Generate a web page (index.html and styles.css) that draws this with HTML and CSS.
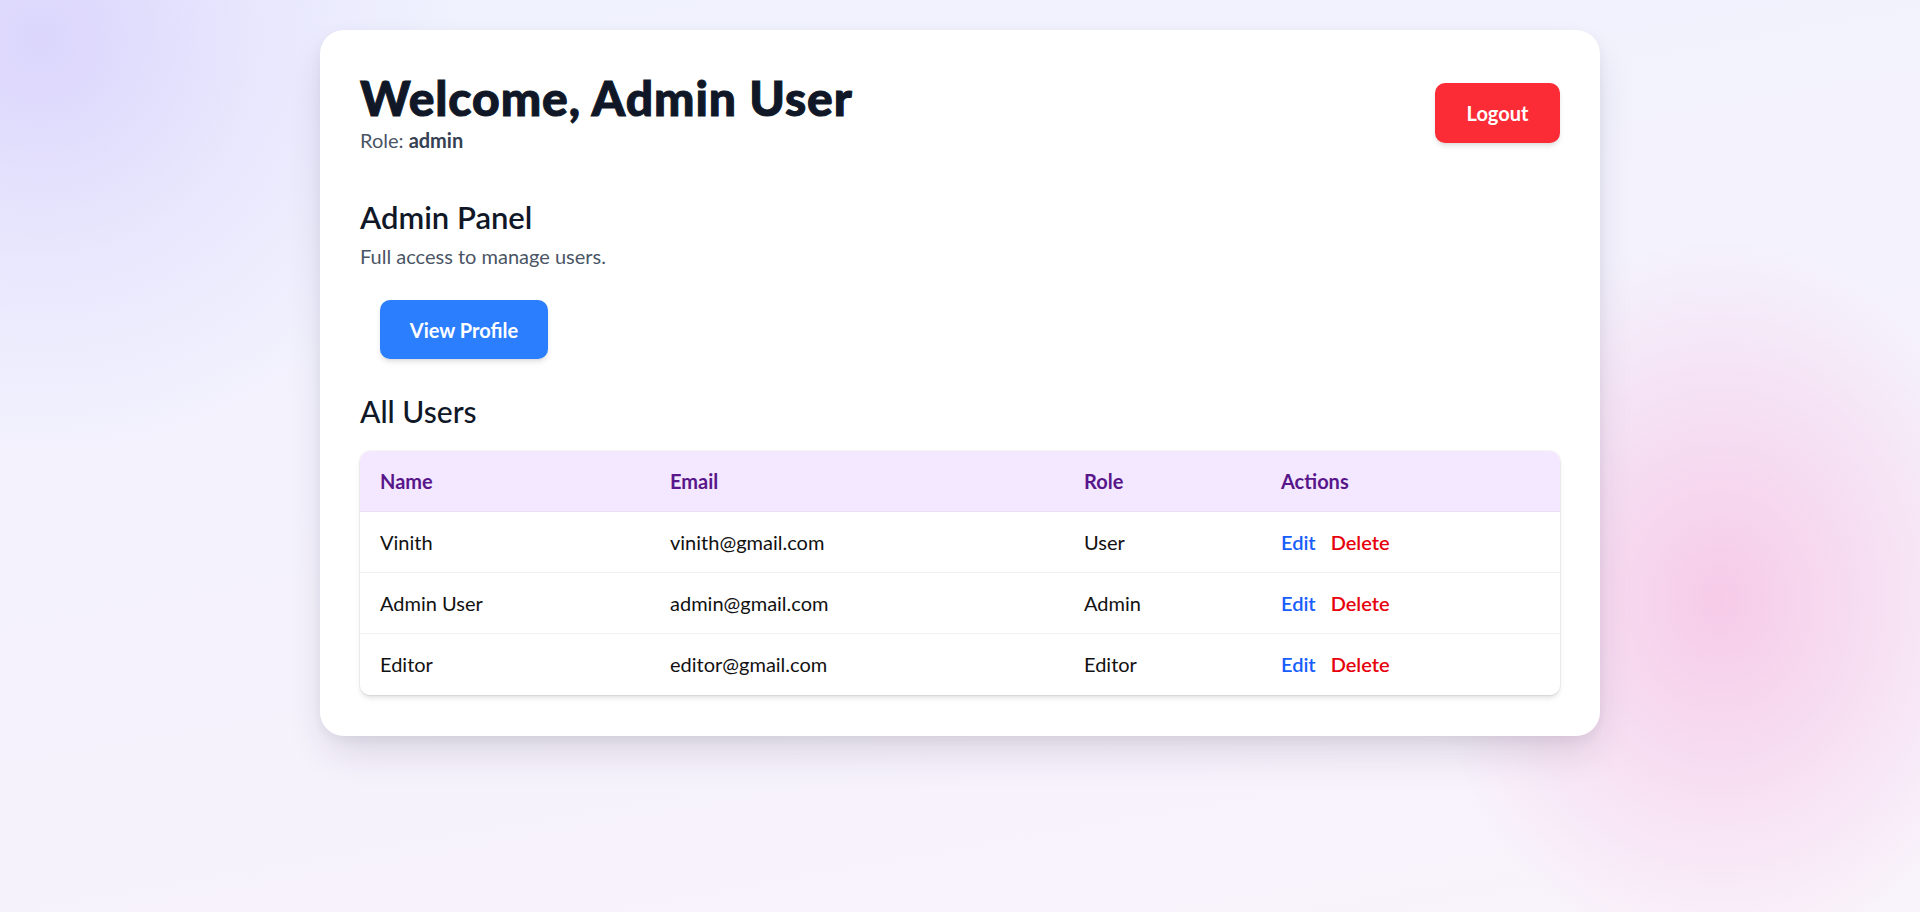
FILE: index.html
```html
<!DOCTYPE html>
<html lang="en">
<head>
<meta charset="utf-8">
<title>Dashboard</title>
<link rel="stylesheet" href="styles.css">
</head>
<body>
  <main class="card">
    <header class="header">
      <div class="greeting">
        <h1 class="title">Welcome, Admin User</h1>
        <p class="role">Role: <strong>admin</strong></p>
      </div>
      <button class="btn btn-logout">Logout</button>
    </header>

    <section class="panel">
      <h2 class="panel-title">Admin Panel</h2>
      <p class="panel-desc">Full access to manage users.</p>
      <button class="btn btn-profile">View Profile</button>
    </section>

    <section class="users">
      <h2 class="users-title">All Users</h2>
      <div class="table-wrap">
        <table class="table">
          <thead>
            <tr>
              <th class="col-name">Name</th>
              <th class="col-email">Email</th>
              <th class="col-role">Role</th>
              <th class="col-actions">Actions</th>
            </tr>
          </thead>
          <tbody>
            <tr>
              <td>Vinith</td>
              <td>vinith@gmail.com</td>
              <td>User</td>
              <td><a class="act act-edit">Edit</a><a class="act act-delete">Delete</a></td>
            </tr>
            <tr>
              <td>Admin User</td>
              <td>admin@gmail.com</td>
              <td>Admin</td>
              <td><a class="act act-edit">Edit</a><a class="act act-delete">Delete</a></td>
            </tr>
            <tr>
              <td>Editor</td>
              <td>editor@gmail.com</td>
              <td>Editor</td>
              <td><a class="act act-edit">Edit</a><a class="act act-delete">Delete</a></td>
            </tr>
          </tbody>
        </table>
      </div>
    </section>
  </main>
</body>
</html>
```

FILE: styles.css
```css
* { box-sizing: border-box; }

html, body { margin: 0; padding: 0; }

body {
  min-height: 912px;
  padding-top: 30px;
  font-family: "Lato", "Noto Sans", sans-serif;
  color: #101828;
  background:
    radial-gradient(ellipse 300px 360px at 1720px 600px, rgba(246, 190, 226, 0.75) 0, rgba(246, 190, 226, 0.35) 55%, rgba(246, 190, 226, 0) 100%),
    radial-gradient(circle at 40px 40px, rgba(214, 206, 252, 0.8) 0, rgba(214, 206, 252, 0.3) 220px, rgba(214, 206, 252, 0) 420px),
    linear-gradient(170deg, #eff2fe 0%, #f4f2fd 45%, #f9f3fb 100%);
}

.card {
  width: 1280px;
  margin: 0 auto;
  padding: 40px 40px 41px;
  background: #ffffff;
  border-radius: 24px;
  box-shadow: 0 20px 40px -8px rgba(40, 30, 60, 0.16), 0 4px 12px rgba(40, 30, 60, 0.05);
}

.header {
  display: flex;
  justify-content: space-between;
  align-items: center;
}

.title {
  margin: 0;
  font-size: 48px;
  line-height: 56px;
  font-weight: 900;
  letter-spacing: 0.9px;
  -webkit-text-stroke: 1px #101828;
  color: #101828;
}

.role {
  margin: 0;
  font-size: 20px;
  line-height: 28px;
  color: #4a5565;
}

.role strong {
  font-weight: 700;
  color: #364153;
}

.btn {
  border: 0;
  font-family: inherit;
  font-size: 20px;
  font-weight: 700;
  color: #ffffff;
  border-radius: 10px;
  height: 60px;
  padding: 0 30px;
  box-shadow: 0 4px 6px -1px rgba(0, 0, 0, 0.1), 0 2px 4px -2px rgba(0, 0, 0, 0.1);
  cursor: pointer;
}

.btn-logout { background: #fb2c36; width: 125px; padding: 0; margin-top: 2px; }

.btn-profile {
  background: #2b7fff;
  margin: 20px;
  width: 168px;
  height: 59px;
  padding: 0;
}

.panel { margin-top: 43px; }

.panel-title {
  margin: 0;
  font-size: 31px;
  line-height: 40px;
  font-weight: 600;
  color: #101828;
}

.panel-desc {
  margin: 5px 0 10px;
  font-size: 20px;
  line-height: 28px;
  color: #4a5565;
}

.users-title {
  margin: 14px 0 22px;
  font-size: 30px;
  line-height: 36px;
  font-weight: 500;
  color: #101828;
}

.table-wrap {
  border-radius: 10px;
  overflow: hidden;
  box-shadow: 0 4px 6px -1px rgba(0, 0, 0, 0.1), 0 2px 4px -2px rgba(0, 0, 0, 0.1);
  outline: 1px solid rgba(0, 0, 0, 0.04);
}

.table {
  width: 100%;
  border-collapse: collapse;
  table-layout: fixed;
  font-size: 20px;
  line-height: 28px;
}

.col-name { width: 290px; }
.col-email { width: 414px; }
.col-role { width: 197px; }

.table th,
.table td {
  text-align: left;
  padding: 16px 20px 16px;
  border-bottom: 1px solid #f0f0f2;
}

.table th {
  background: #f3e8ff;
  color: #59168b;
  font-weight: 700;
  border-bottom-color: #e9e1f2;
}

.table td { color: #111111; }

.table tbody tr:last-child td { border-bottom-color: #ffffff; }

.act {
  font-weight: 600;
  cursor: pointer;
}

.act-edit { color: #155dfc; margin-right: 15px; }
.act-delete { color: #e7000b; }
```
